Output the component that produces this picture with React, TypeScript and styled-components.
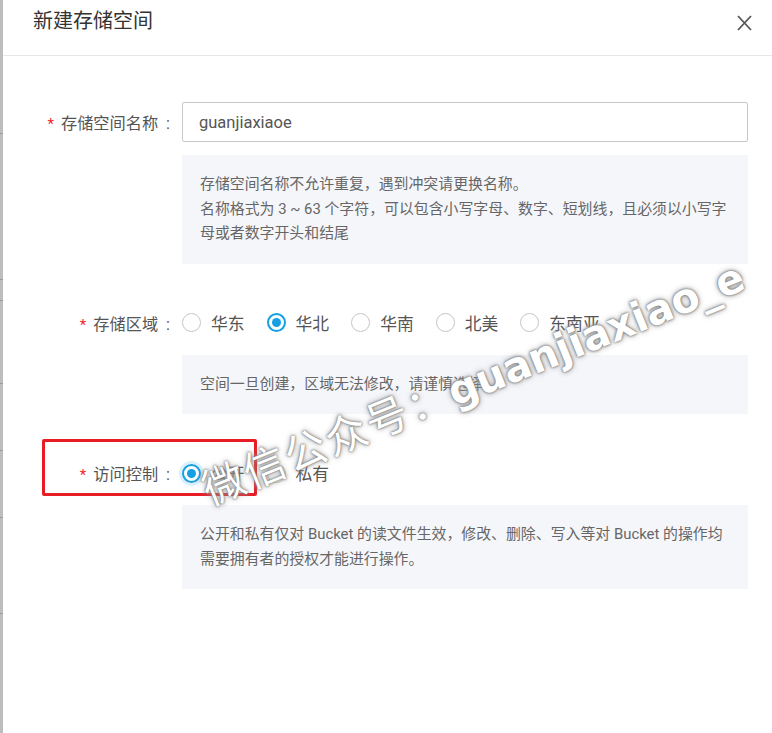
import React from "react";
import styled, { createGlobalStyle } from "styled-components";

const Global = createGlobalStyle`
  html, body { margin: 0; padding: 0; background: #fff; }
  body { font-family: Roboto, "Noto Sans CJK SC", sans-serif; }
  * { box-sizing: border-box; }
`;

const Page = styled.div`
  position: relative;
  width: 772px;
  height: 733px;
  display: flex;
  overflow: hidden;
  background: #fff;
`;

const Strip = styled.div`
  width: 3px;
  flex: none;
  background:
    linear-gradient(to bottom,
      transparent 133px, #9a9a9a 133px, #9a9a9a 134px, transparent 134px,
      transparent 279px, #9a9a9a 279px, #9a9a9a 280px, transparent 280px,
      transparent 300px, #9a9a9a 300px, #9a9a9a 301px, transparent 301px,
      transparent 383px, #9a9a9a 383px, #9a9a9a 384px, transparent 384px,
      transparent 450px, #9a9a9a 450px, #9a9a9a 451px, transparent 451px,
      transparent 517px, #9a9a9a 517px, #9a9a9a 518px, transparent 518px,
      transparent 613px, #9a9a9a 613px, #9a9a9a 614px, transparent 614px),
    #bdbdbd;
`;

const Dialog = styled.div`
  flex: 1;
  display: flex;
  flex-direction: column;
`;

const Header = styled.div`
  height: 56px;
  flex: none;
  display: flex;
  justify-content: space-between;
  align-items: flex-start;
  padding: 7px 20px 0 30px;
  border-bottom: 1px solid #e6e6e6;
`;

const Title = styled.div`
  font-size: 20px;
  line-height: 28px;
  color: #333;
`;

const Close = styled.button`
  margin-top: 8px;
  width: 16px;
  height: 16px;
  padding: 0;
  border: none;
  background: none;
  display: flex;
  align-items: center;
  justify-content: center;
`;

const Body = styled.div`
  padding: 46px 24px 0 0;
  display: flex;
  flex-direction: column;
`;

const Row = styled.div<{ $mt?: number }>`
  display: grid;
  grid-template-columns: 179px 566px;
  align-items: center;
  margin-top: ${(p) => p.$mt ?? 0}px;
  min-height: 40px;
`;

const Label = styled.div`
  text-align: right;
  padding-right: 12px;
  font-size: 16.2px;
  color: #555;
  white-space: nowrap;
`;

const Star = styled.span`
  color: #f0262c;
  margin-right: 7px;
  font-size: 15px;
`;

const Colon = styled.span`
  margin-left: 8px;
`;

const Input = styled.div`
  height: 40px;
  border: 1px solid #c8c8c8;
  border-radius: 2px;
  display: flex;
  align-items: center;
  padding-left: 16px;
  font-size: 16.5px;
  color: #555;
`;

const Help = styled.div<{ $mt: number }>`
  margin-left: 179px;
  width: 566px;
  margin-top: ${(p) => p.$mt}px;
  background: #f5f6fa;
  padding: 17px 18px 18px;
  font-size: 14.9px;
  line-height: 24.5px;
  color: #666;
`;

const Line = styled.div`
  white-space: nowrap;
`;

const Radios = styled.div`
  display: flex;
  align-items: center;
`;

const Option = styled.label`
  display: flex;
  align-items: center;
  margin-right: 22px;
  font-size: 16.8px;
  color: #555;
`;

const Circle = styled.span<{ $on?: boolean; $focus?: boolean }>`
  width: 19px;
  height: 19px;
  border-radius: 50%;
  border: ${(p) => (p.$on ? "2px solid #14a0e2" : "1px solid #c6c6c6")};
  display: flex;
  align-items: center;
  justify-content: center;
  margin-right: 10px;
  box-shadow: ${(p) => (p.$focus ? "0 0 0 3px #dcf0fb" : "none")};
  &::after {
    content: "";
    width: 9px;
    height: 9px;
    border-radius: 50%;
    background: ${(p) => (p.$on ? "#14a0e2" : "transparent")};
  }
`;

const Highlight = styled.div`
  position: absolute;
  left: 42px;
  top: 439px;
  width: 215px;
  height: 57px;
  border: 3px solid #e81c24;
  border-radius: 2px;
  pointer-events: none;
`;

const Watermark = styled.div`
  position: absolute;
  left: 203px;
  top: 458px;
  transform-origin: left center;
  transform: rotate(-22deg);
  white-space: nowrap;
  color: #fff;
  pointer-events: none;
  display: flex;
  align-items: baseline;
`;

const WmCjk = styled.span`
  font-family: "Noto Sans CJK SC", sans-serif;
  font-size: 42px;
  letter-spacing: 2px;
  font-weight: 400;
  text-shadow: 0 0 2px #777, 0 0 3px #888, 0 0 6px #999;
`;

const WmLatin = styled.span`
  font-family: "DejaVu Sans", sans-serif;
  font-size: 41px;
  font-weight: 700;
  text-shadow: 0 0 2px #777, 0 0 3px #888, 0 0 6px #999;
`;

const regions = ["华东", "华北", "华南", "北美", "东南亚"];

export default function App() {
  return (
    <>
      <Global />
      <Page>
        <Strip />
        <Dialog>
          <Header>
            <Title>新建存储空间</Title>
            <Close aria-label="关闭">
              <svg width="15" height="16" viewBox="0 0 15 16">
                <path d="M1 1 L14 15 M14 1 L1 15" stroke="#555" strokeWidth="1.8" fill="none" />
              </svg>
            </Close>
          </Header>
          <Body>
            <Row>
              <Label>
                <Star>*</Star>存储空间名称<Colon>:</Colon>
              </Label>
              <Input>guanjiaxiaoe</Input>
            </Row>
            <Help $mt={13}>
              <Line>存储空间名称不允许重复，遇到冲突请更换名称。</Line>
              <Line>名称格式为 3 ~ 63 个字符，可以包含小写字母、数字、短划线，且必须以小写字</Line>
              <Line>母或者数字开头和结尾</Line>
            </Help>
            <Row $mt={39}>
              <Label>
                <Star>*</Star>存储区域<Colon>:</Colon>
              </Label>
              <Radios>
                {regions.map((r) => (
                  <Option key={r}>
                    <Circle $on={r === "华北"} />
                    {r}
                  </Option>
                ))}
              </Radios>
            </Row>
            <Help $mt={12}>
              <Line>空间一旦创建，区域无法修改，请谨慎选择。</Line>
            </Help>
            <Row $mt={39}>
              <Label>
                <Star>*</Star>访问控制<Colon>:</Colon>
              </Label>
              <Radios>
                <Option>
                  <Circle $on $focus />
                  公开
                </Option>
                <Option>
                  <Circle />
                  私有
                </Option>
              </Radios>
            </Row>
            <Help $mt={12}>
              <Line>公开和私有仅对 Bucket 的读文件生效，修改、删除、写入等对 Bucket 的操作均</Line>
              <Line>需要拥有者的授权才能进行操作。</Line>
            </Help>
          </Body>
        </Dialog>
        <Highlight />
        <Watermark>
          <WmCjk>微信公众号：</WmCjk>
          <WmLatin>guanjiaxiao_e</WmLatin>
        </Watermark>
      </Page>
    </>
  );
}
